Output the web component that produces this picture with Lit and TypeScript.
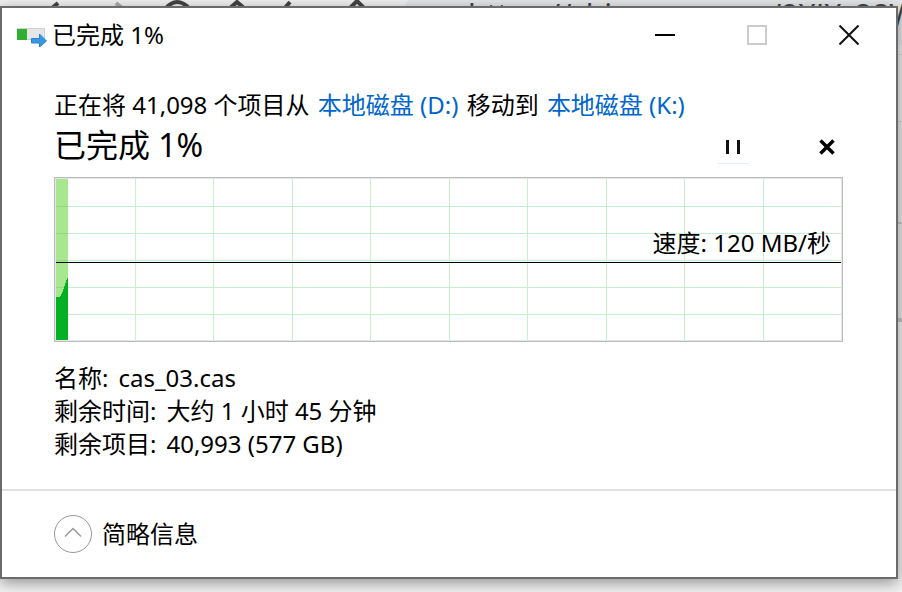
import { LitElement, html, css, svg } from "lit";
import { customElement, property } from "lit/decorators.js";

const COLUMNS = [10, 20, 30, 40, 50, 60, 70, 80, 90];
const ROWS = [27, 54, 81, 108, 135];

@customElement("speed-chart")
class SpeedChart extends LitElement {
  @property() speed = "";

  static styles = css`
    :host {
      display: grid;
      height: 161px;
      padding: 1px;
      background: #e5e5e5;
      border: 1px solid #bcbcbc;
    }
    .plot,
    .speed {
      grid-area: 1 / 1;
    }
    .plot {
      display: block;
      width: 100%;
      height: 161px;
      background: #fff;
    }
    .speed {
      justify-self: end;
      margin: 48px 10px 0 0;
      line-height: 32px;
      z-index: 1;
    }
  `;

  render() {
    return html`
      <svg class="plot" aria-hidden="true" shape-rendering="crispEdges">
        <rect width="12" height="161" fill="#a8e68f" />
        ${ROWS.map((y) => svg`<rect x="0" y=${y} width="100%" height="1" fill="#c6efce" />
          <rect x="0" y=${y} width="12" height="1" fill="#8cdc78" />`)}
        ${COLUMNS.map((x) => svg`<rect x="${x}%" y="0" width="1" height="161" fill="#c6efce" />`)}
        <path d="M0 118h3l2-2 2-4 2-6 2-6 1-2v63H0z" fill="#06b025" />
        <rect y="83" width="100%" height="1" fill="#000" />
      </svg>
      <span class="speed">${this.speed}</span>
    `;
  }
}

@customElement("app-root")
class AppRoot extends LitElement {
  static styles = css`
    :host {
      display: block;
      position: relative;
      min-height: 100vh;
      box-sizing: border-box;
      padding: 6px 4px 13px 0;
      overflow: hidden;
      background: #f3f3f3;
      color: #000;
      font-family: "Noto Sans", "Noto Sans CJK SC", sans-serif;
      font-size: 24px;
    }
    button {
      display: flex;
      align-items: center;
      justify-content: center;
      padding: 0;
      border: 0;
      background: none;
      color: inherit;
      font: inherit;
    }
    svg {
      display: block;
    }
    .behind {
      position: absolute;
      inset: 0;
      background: linear-gradient(#e4e6e8 45px, #ededed 45px 54px, #dcdcdc 54px 55px, #ededed 55px 121px, #d0d0d0 121px 122px, #e8e8e8 122px 222px, #c8c8c8 222px 224px, #e8e8e8 224px 318px, #c4c4c4 318px 322px, #f3f3f3 322px);
    }
    .toolbar {
      position: absolute;
      left: 0;
      top: 0;
    }
    .address {
      position: absolute;
      top: -3px;
      font-size: 30px;
      line-height: 36px;
      color: #3c4650;
      white-space: nowrap;
    }
    .scheme {
      left: 468px;
    }
    .path {
      left: 770px;
    }
    .window {
      position: relative;
      background: #fff;
      border: 2px solid #6b6b6b;
      box-shadow: 0 4px 14px rgba(0, 0, 0, 0.4);
    }
    .titlebar {
      display: flex;
      height: 54px;
      align-items: center;
      padding: 0 1px 0 14px;
    }
    .title {
      flex: 1;
      margin: 0 0 0 4px;
      font-size: 24px;
      font-weight: 400;
      line-height: 32px;
    }
    .caption {
      width: 92px;
      height: 54px;
    }
    .content {
      padding: 27px 53px 29px 52px;
    }
    .summary {
      margin: 0;
      line-height: 32px;
    }
    .summary a {
      padding: 0 2px;
      color: #0066cc;
      text-decoration: none;
    }
    .progress {
      display: flex;
      align-items: center;
      height: 48px;
      margin-bottom: 8px;
    }
    .percent {
      flex: 1;
      margin: 0;
      font-size: 32px;
      font-weight: 400;
      line-height: 48px;
    }
    .action {
      width: 32px;
      height: 38px;
      padding-top: 4px;
      border-bottom: 1px solid transparent;
    }
    .pause {
      margin-right: 62px;
      border-bottom-color: #e5eff8;
    }
    .details {
      margin: 19px 0 0;
    }
    .row {
      display: flex;
      gap: 10px;
      line-height: 33px;
    }
    .row dd {
      margin: 0;
    }
    .footer {
      display: flex;
      align-items: center;
      height: 86px;
      padding-left: 52px;
      border-top: 2px solid #e1e1e1;
      box-sizing: content-box;
    }
    .toggle {
      gap: 10px;
      line-height: 38px;
    }
  `;

  private rows = [
    ["名称:", "cas_03.cas"],
    ["剩余时间:", "大约 1 小时 45 分钟"],
    ["剩余项目:", "40,993 (577 GB)"],
  ];

  render() {
    return html`
      <div class="behind" aria-hidden="true">
        <svg class="toolbar" width="420" height="8" fill="none" stroke="#444" stroke-width="4">
          <path fill="#f0f0f0" stroke="none" d="M0 0h408l-4 8H0z" />
          <path d="M51 9l7-6M229 9l8-7 8 7M284 9l6-7M349 9l8-8 8 8" />
          <path stroke="#aaa" d="M116 3l7 6" />
          <path d="M165 9q12-14 25 0" />
        </svg>
        <span class="address scheme">https://cbi</span>
        <span class="address path">/9XJX_28W</span>
      </div>
      <main class="window">
        <header class="titlebar">
          <svg width="32" height="24" viewBox="0 0 32 24" aria-hidden="true">
            <rect x="1.5" y="5.5" width="27" height="11" fill="#e6e6e6" stroke="#d0d0d0" />
            <rect x="1" y="6" width="10" height="11" fill="#30b030" />
            <path d="M15.500 15.500h8v-4.500l7 7-7 6v-4h-8z" fill="#3898e8" stroke="#2d83cf" />
          </svg>
          <h1 class="title">已完成 1%</h1>
          <button class="caption" aria-label="最小化">
            <svg width="20" height="20"><path d="M0 10h20" stroke="#000" stroke-width="2" /></svg>
          </button>
          <button class="caption" aria-label="最大化" disabled>
            <svg width="20" height="20"><rect x="1" y="1" width="18" height="18" fill="none" stroke="#ccc" stroke-width="2" /></svg>
          </button>
          <button class="caption" aria-label="关闭">
            <svg width="20" height="20"><path d="M.5.5l19 19M19.500.5l-19 19" stroke="#111" stroke-width="2" /></svg>
          </button>
        </header>
        <section class="content">
          <p class="summary">正在将 41,098 个项目从 <a href="#d">本地磁盘 (D:)</a> 移动到 <a href="#k">本地磁盘 (K:)</a></p>
          <div class="progress">
            <h2 class="percent">已完成 1%</h2>
            <button class="action pause" aria-label="暂停">
              <svg width="16" height="16"><path d="M2.500 1v14M13.500 1v14" stroke="#111" stroke-width="3" /></svg>
            </button>
            <button class="action" aria-label="取消">
              <svg width="16" height="16"><path d="M1.500 1.500l13 13M14.500 1.500l-13 13" stroke="#000" stroke-width="3.500" /></svg>
            </button>
          </div>
          <speed-chart speed="速度: 120 MB/秒"></speed-chart>
          <dl class="details">
            ${this.rows.map(([k, v]) => html`<div class="row"><dt>${k}</dt><dd>${v}</dd></div>`)}
          </dl>
        </section>
        <footer class="footer">
          <button class="toggle">
            <svg width="38" height="38" fill="none" aria-hidden="true">
              <circle cx="19" cy="19" r="18.500" stroke="#999" />
              <path d="M11 21.500l8-8 8 8" stroke="#999" stroke-width="1.500" />
            </svg>
            简略信息
          </button>
        </footer>
      </main>
    `;
  }
}
